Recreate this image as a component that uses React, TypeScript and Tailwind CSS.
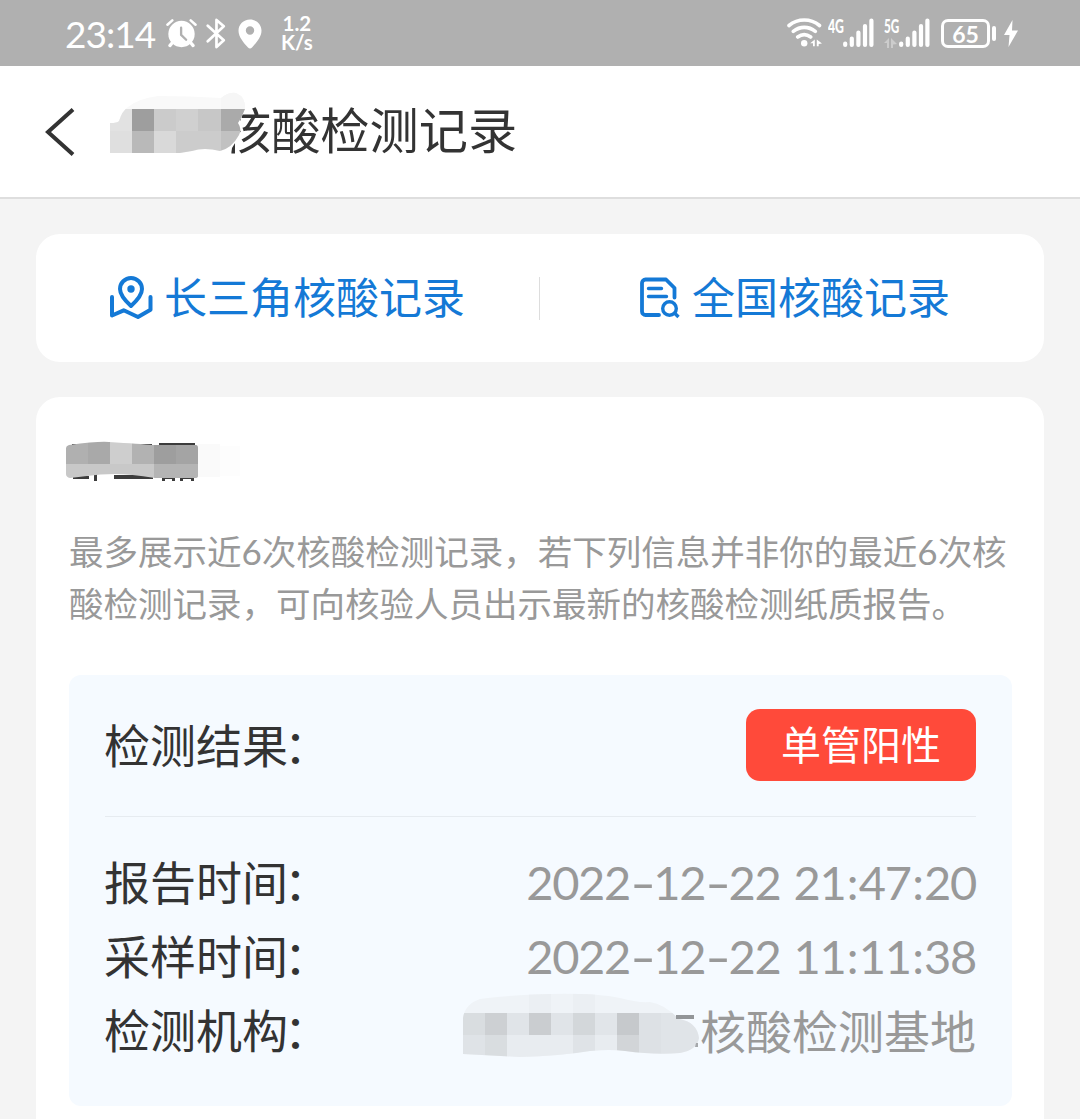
import type { ReactNode, SVGProps } from "react";

const CJK = "font-['Noto_Sans_CJK_SC',sans-serif]";
const LATIN = "font-['Lato','Noto_Sans_CJK_SC',sans-serif]";

type Tile = [x: number, y: number, w: number, h: number, fill: string];

function Tiles({ tiles }: { tiles: Tile[] }) {
  return (
    <>
      {tiles.map(([x, y, w, h, fill]) => (
        <rect key={`${x}-${y}`} x={x} y={y} width={w} height={h} fill={fill} />
      ))}
    </>
  );
}

function IconAlarm(props: SVGProps<SVGSVGElement>) {
  return (
    <svg viewBox="0 0 32 30" fill="none" {...props}>
      <circle cx="16" cy="16" r="13.6" fill="#fff" />
      <path d="M1.5 6.5l5-4.5M30.5 6.5l-5-4.5" stroke="#fff" strokeWidth="2.6" strokeLinecap="round" />
      <path d="M6.5 25l-2.5 3M25.5 25l2.5 3" stroke="#fff" strokeWidth="3.4" strokeLinecap="round" />
      <path d="M15.6 9.5v7.5l5.2 5" stroke="#b0b0b0" strokeWidth="2.4" strokeLinecap="round" strokeLinejoin="round" />
    </svg>
  );
}

function IconBluetooth(props: SVGProps<SVGSVGElement>) {
  return (
    <svg viewBox="0 0 20 32" fill="none" {...props}>
      <path
        d="M1.5 8L18 23l-7.5 7V2L18 8.5 1.5 24"
        stroke="#fff"
        strokeWidth="2.8"
        strokeLinecap="round"
        strokeLinejoin="round"
      />
    </svg>
  );
}

function IconPin(props: SVGProps<SVGSVGElement>) {
  return (
    <svg viewBox="0 0 24 30" {...props}>
      <path
        fillRule="evenodd"
        fill="#fff"
        d="M12 .5C5.4.5.5 5.5.5 11.7c0 6.3 5.5 12.3 9.5 16.8 1.2 1.3 2.8 1.3 4 0 4-4.5 9.5-10.5 9.5-16.8C23.5 5.5 18.6.5 12 .5zM12 7.3a4.2 4.2 0 1 1 0 8.4 4.2 4.2 0 0 1 0-8.4z"
      />
    </svg>
  );
}

function IconWifi(props: SVGProps<SVGSVGElement>) {
  return (
    <svg viewBox="0 0 36 30" fill="none" {...props}>
      <path
        d="M2 7.5c9-7.3 21.500-7.3 30.500 0M6.3 13.3c6.7-5.2 15.3-5.2 22 0M10.7 19c4-3 9-3 13 0"
        stroke="#fff"
        strokeWidth="3.6"
        strokeLinecap="round"
      />
      <circle cx="17.2" cy="25.3" r="3.2" fill="#fff" />
      <path d="M27.8 21.5v6.8h-1.8v-3h-2.8zM29.8 21.5l5.2 4.1-3.3.4v2.3h-1.9z" fill="#fff" />
    </svg>
  );
}

function SignalBars(props: SVGProps<SVGSVGElement>) {
  return (
    <svg viewBox="0 0 31 30" fill="none" {...props}>
      <path d="M2.2 25.5v1.5M8.8 20.5v6.5M15.4 14.5v12.5M22 8v19M28.4 2.5v24.5" stroke="#fff" strokeWidth="4.2" strokeLinecap="round" />
    </svg>
  );
}

function IconMap(props: SVGProps<SVGSVGElement>) {
  return (
    <svg viewBox="0 0 44 44" fill="none" stroke="currentColor" strokeWidth="4" strokeLinecap="round" strokeLinejoin="round" {...props}>
      <path d="M22 30c-5.5-5-11-10.500-11-17A11 11 0 0 1 33 13c0 6.500-5.500 12-11 17z" />
      <circle cx="22" cy="13" r="3.7" fill="currentColor" stroke="none" />
      <path d="M3 21v18.500l11.700-5.200L29 41l12.500-7.200V21" />
    </svg>
  );
}

function IconRecord(props: SVGProps<SVGSVGElement>) {
  return (
    <svg viewBox="0 0 42 44" fill="none" stroke="currentColor" strokeWidth="3.8" {...props}>
      <path d="M35.500 21.500v-9.500L27 3.500H6.500A3.500 3.500 0 0 0 3 7v28.500a3.500 3.500 0 0 0 3.500 3.500H20" strokeLinecap="round" strokeLinejoin="round" />
      <path d="M9.500 12.500h13M9.500 20.500h18" strokeWidth="3.4" strokeLinecap="round" />
      <circle cx="30.5" cy="32.5" r="6.8" strokeWidth="3.4" />
      <path d="M35.500 37l4 4" strokeWidth="3.4" />
    </svg>
  );
}

function TitleMosaic(props: SVGProps<SVGSVGElement>) {
  return (
    <svg viewBox="0 0 150 70" {...props}>
      <defs>
        <clipPath id="titleBlob">
          <path d="M10 34Q17 34 19 32Q22 22 28 18Q37 10 58 7Q90 7 121 9Q128 3 136 4Q146 8 145 20L142 27L138 34Q142 40 139 46Q132 59 120 62Q104 58 92 62L80 64H10z" />
        </clipPath>
      </defs>
      <path d="M118 8h24v16l-3 10 1 12-8 13-2 8h-12z" fill="#fff" />
      <g clipPath="url(#titleBlob)">
        <rect width="150" height="70" fill="#f9f9f9" />
        <Tiles
          tiles={[
            [121, 0, 29, 20, "#f6f6f6"],
            [10, 20, 22, 22, "#e2e2e2"],
            [32, 20, 22, 22, "#9e9e9e"],
            [54, 20, 22, 22, "#cbcbcb"],
            [76, 20, 22, 22, "#d0d0d0"],
            [98, 20, 23, 22, "#c7c7c7"],
            [121, 20, 29, 22, "#aaaaaa"],
            [10, 42, 22, 22, "#dfdfdf"],
            [32, 42, 22, 22, "#b9b9b9"],
            [54, 42, 22, 22, "#d9d9d9"],
            [76, 42, 45, 22, "#cccccc"],
            [121, 42, 29, 22, "#c1c1c1"],
          ]}
        />
      </g>
    </svg>
  );
}

function NameMosaic(props: SVGProps<SVGSVGElement>) {
  return (
    <svg viewBox="0 0 180 44" {...props}>
      <path d="M7 4h13v3H7zM72 4h15v3H72zM94 3h36v3H94zM8 36h16v3H8zM29 33h3v8h-3zM49 35h39v4H49zM97 37h3v4h-3zM97 37h12v2H97zM107 37h3v4h-3zM115 37h14v2h-14zM115 37h3v4h-3zM126 37h3v4h-3z" fill="#3c3c3c" />
      <defs>
        <clipPath id="nameBlob">
          <path d="M4 5Q34 1 44 2Q75 4 88 5H131Q133 5 133 8V36Q133 38 130 38H90Q65 34 50 34Q35 34 22 36L5 38Q1 37 1 34V8Q1 6 4 5z" />
        </clipPath>
      </defs>
      <Tiles tiles={[[133, 4, 22, 33, "#fafafa"], [155, 6, 20, 30, "#fdfdfd"]]} />
      <g clipPath="url(#nameBlob)">
        <Tiles
          tiles={[
            [0, 0, 23, 24, "#b0b0b0"],
            [23, 0, 22, 24, "#a9a9a9"],
            [45, 0, 22, 24, "#cecece"],
            [67, 0, 22, 24, "#b2b2b2"],
            [89, 0, 22, 24, "#9e9e9e"],
            [111, 0, 22, 24, "#a4a4a4"],
            [0, 24, 89, 16, "#c8c8c8"],
            [89, 24, 44, 16, "#b4b4b4"],
          ]}
        />
      </g>
    </svg>
  );
}

function OrgMosaic(props: SVGProps<SVGSVGElement>) {
  return (
    <svg viewBox="0 0 240 70" {...props}>
      <defs>
        <clipPath id="orgBlob">
          <path d="M3 26Q5 12 20 7Q50 3 90 2Q135 1 160 6Q178 11 190 10Q204 12 219 27Q237 30 239 46Q237 58 220 61Q195 63 165 59Q150 57 130 59Q100 64 60 65L3 62z" />
        </clipPath>
      </defs>
      <g clipPath="url(#orgBlob)">
        <rect width="240" height="70" fill="#eff3f7" />
        <Tiles
          tiles={[
            [69, 0, 22, 21, "#ebeff3"],
            [113, 0, 22, 21, "#ebeff3"],
            [0, 21, 25, 22, "#d9dde0"],
            [25, 21, 22, 22, "#cdd0d3"],
            [47, 21, 22, 22, "#e0e4e8"],
            [69, 21, 22, 22, "#cacdd0"],
            [91, 21, 22, 22, "#e0e4e8"],
            [113, 21, 22, 22, "#d3d7da"],
            [135, 21, 22, 22, "#e1e5e9"],
            [157, 21, 22, 22, "#c6c9cc"],
            [179, 21, 22, 43, "#dde1e5"],
            [201, 21, 39, 43, "#e0e4e8"],
            [0, 43, 25, 24, "#dfe3e7"],
            [25, 43, 22, 24, "#d9dde0"],
            [47, 43, 66, 24, "#e8ecf0"],
            [113, 43, 22, 24, "#dfe3e7"],
            [135, 43, 22, 24, "#e8ecf0"],
            [157, 43, 22, 24, "#d2d5d8"],
          ]}
        />
      </g>
      <path d="M216 23h18v4h-18z" fill="#929598" />
      <path d="M236 51h2v4h-3z" fill="#a5a8ab" />
    </svg>
  );
}

function StatusBar() {
  return (
    <div className={`flex h-[66px] shrink-0 items-start bg-[#b0b0b0] text-white ${LATIN}`}>
      <div className="ml-[65px] mt-[11px] w-[101px] whitespace-nowrap text-[37px] leading-[45px] tracking-[-1px]">23:14</div>
      <IconAlarm className="mt-[18px] h-[30px] w-[31px]" />
      <IconBluetooth className="ml-[9px] mt-[18px] h-[31px] w-[20px]" />
      <IconPin className="ml-[12px] mt-[19px] h-[30px] w-[24px]" />
      <div className="ml-[19px] mt-[14px] text-center text-[20.5px] font-bold leading-[19px]">
        <div>1.2</div>
        <div>K/s</div>
      </div>
      <div className="ml-auto mr-[62px] flex">
        <IconWifi className="mt-[18px] h-[30px] w-[36px]" />
        <div className="ml-[5px] mt-[17px] w-[17px]">
          <div className="origin-left scale-x-[0.68] text-[18px] font-black leading-[18px]">4G</div>
        </div>
        <SignalBars className="-ml-[2px] mt-[18px] h-[30px] w-[31px]" />
        <div className="ml-[10px] mt-[17px] w-[16px]">
          <div className="origin-left scale-x-[0.65] text-[18px] font-black leading-[18px]">5G</div>
          <svg viewBox="0 0 13 12" className="mt-[2px] h-[12px] w-[13px]">
            <path d="M5 1v10H3V6H0zM7 1l6 6-4 .5V11H7z" fill="#ccc" />
          </svg>
        </div>
        <SignalBars className="-ml-px mt-[18px] h-[30px] w-[31px]" />
        <div className="ml-[11px] mt-[19px] flex h-[29px] w-[49px] items-center justify-center rounded-[7px] border-[3px] border-white text-[23px] leading-[22px]">
          <span className="font-bold">65</span>
        </div>
        <div className="ml-[2px] mt-[26px] h-[15px] w-[4px] rounded-full bg-white" />
        <svg viewBox="0 0 14 27" className="ml-[8px] mt-[20px] h-[27px] w-[14px]">
          <path d="M8.500 0L0 15h5.500L4.500 27 14 10.500H8z" fill="#fff" />
        </svg>
      </div>
    </div>
  );
}

function DateTime({ date, time }: { date: string; time: string }) {
  return (
    <div className={`flex whitespace-pre text-[47px] leading-[72px] tracking-[-1.3px] text-[#999] ${LATIN}`}>
      {date.split("-").map((part, i) => (
        <span key={i} className="flex">
          {i > 0 ? (
            <span className="w-[23.3px] text-center">
              <span className="inline-block scale-x-[1.5]">-</span>
            </span>
          ) : null}
          {part}
        </span>
      ))}
      <span className="ml-[13px] flex">
        {time.split(":").map((part, i) => (
          <span key={i} className="flex">
            {i > 0 ? <span className="w-[13.4px] text-center">:</span> : null}
            {part}
          </span>
        ))}
      </span>
    </div>
  );
}

function Label({ children }: { children: string }) {
  return (
    <span className="-ml-px text-[46px] leading-[68px] text-[#333]">
      {children}
      <span className="-ml-1">：</span>
    </span>
  );
}

function Row({ label, children }: { label: string; children: ReactNode }) {
  return (
    <div className="flex h-[74px] items-start justify-between">
      <Label>{label}</Label>
      {children}
    </div>
  );
}

export default function App() {
  return (
    <div className={`flex h-[1119px] w-[1080px] flex-col overflow-hidden bg-[#f4f4f4] ${CJK}`}>
      <StatusBar />

      <header className="flex h-[133px] shrink-0 items-center border-b-2 border-[#dedede] bg-white">
        <svg viewBox="0 0 30 48" fill="none" className="ml-[45px] h-[48px] w-[30px]">
          <path d="M28 1.500L3 24l25 22.500" stroke="#333" strokeWidth="4" />
        </svg>
        <h1 className="relative mb-[7px] ml-[147px] whitespace-nowrap text-[49.2px] leading-[70px] text-[#333]">
          核酸检测记录
          <TitleMosaic className="absolute -left-[122px] -top-[4px] h-[70px] w-[150px]" />
        </h1>
      </header>

      <div className="mx-[36px] mt-[35px] flex h-[128px] shrink-0 items-center rounded-[24px] bg-white text-[43px] leading-[60px] text-[#1479d6]">
        <a className="flex w-[503px] items-center pl-[73px]">
          <IconMap className="h-[44px] w-[44px]" />
          <span className="mb-[7px] ml-[11px]">长三角核酸记录</span>
        </a>
        <div className="h-[43px] w-px bg-[#ddd]" />
        <a className="flex flex-1 items-center pl-[99px]">
          <IconRecord className="h-[44px] w-[42px]" />
          <span className="mb-[7px] ml-[11px]">全国核酸记录</span>
        </a>
      </div>

      <section className="mx-[36px] mt-[35px] h-[760px] shrink-0 rounded-t-[24px] bg-white px-[33px] pt-[43px]">
        <NameMosaic className="-ml-[4px] h-[44px] w-[180px]" />
        <p className="mt-[40px] whitespace-nowrap text-[34.5px] leading-[52px] text-[#999]">
          最多展示近<span className={`text-[35px] leading-none ${LATIN}`}>6</span>次核酸检测记录，若下列信息并非你的最近
          <span className={`text-[35px] leading-none ${LATIN}`}>6</span>次核
          <br />
          酸检测记录，可向核验人员出示最新的核酸检测纸质报告。
        </p>

        <div className="mr-[-1px] mt-[47px] h-[431px] rounded-[12px] bg-[#f5faff] px-[36px] pt-[34px]">
          <div className="flex h-[108px] items-start justify-between border-b border-[#e6ebf0]">
            <Label>检测结果</Label>
            <span className="h-[72px] w-[230px] rounded-[14px] bg-[#ff4a3a] text-center text-[40px] leading-[68px] text-white">
              单管阳性
            </span>
          </div>
          <div className="mt-[29px]">
            <Row label="报告时间">
              <DateTime date="2022-12-22" time="21:47:20" />
            </Row>
            <Row label="采样时间">
              <DateTime date="2022-12-22" time="11:11:38" />
            </Row>
            <Row label="检测机构">
              <span className="relative text-[46px] leading-[70px] text-[#999]">
                核酸检测基地
                <OrgMosaic className="absolute -left-[240px] -top-[2px] h-[70px] w-[240px]" />
              </span>
            </Row>
          </div>
        </div>
      </section>
    </div>
  );
}
